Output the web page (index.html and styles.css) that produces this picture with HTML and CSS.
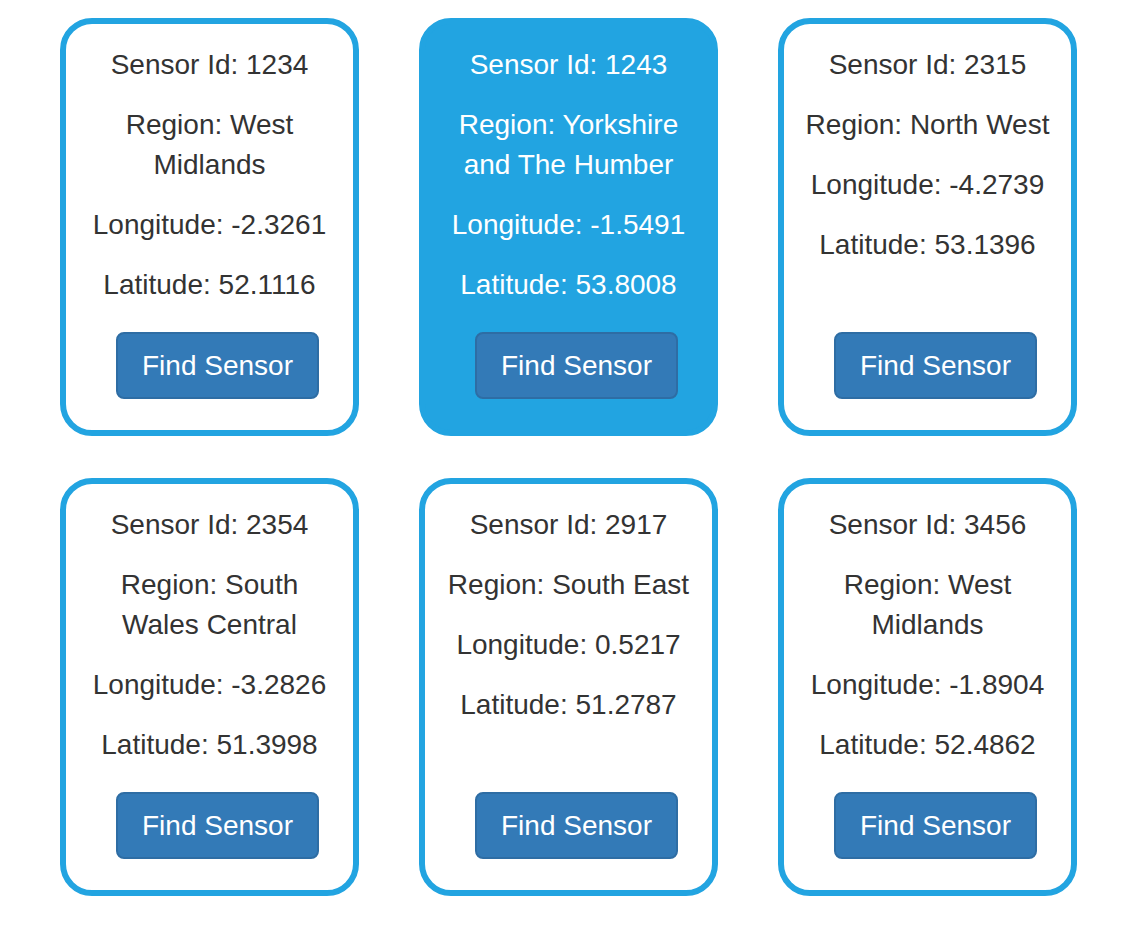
FILE: index.html
```html
<!DOCTYPE html>
<html>
<head>
<meta charset="utf-8">
<link rel="stylesheet" href="styles.css">
</head>
<body>
<div class="grid">
  <div class="card">
    <p>Sensor Id: 1234</p>
    <p>Region: West Midlands</p>
    <p>Longitude: -2.3261</p>
    <p>Latitude: 52.1116</p>
    <button class="btn">Find Sensor</button>
  </div>
  <div class="card selected">
    <p>Sensor Id: 1243</p>
    <p>Region: Yorkshire and The Humber</p>
    <p>Longitude: -1.5491</p>
    <p>Latitude: 53.8008</p>
    <button class="btn">Find Sensor</button>
  </div>
  <div class="card">
    <p>Sensor Id: 2315</p>
    <p>Region: North West</p>
    <p>Longitude: -4.2739</p>
    <p>Latitude: 53.1396</p>
    <button class="btn">Find Sensor</button>
  </div>
  <div class="card">
    <p>Sensor Id: 2354</p>
    <p>Region: South Wales Central</p>
    <p>Longitude: -3.2826</p>
    <p>Latitude: 51.3998</p>
    <button class="btn">Find Sensor</button>
  </div>
  <div class="card">
    <p>Sensor Id: 2917</p>
    <p>Region: South East</p>
    <p>Longitude: 0.5217</p>
    <p>Latitude: 51.2787</p>
    <button class="btn">Find Sensor</button>
  </div>
  <div class="card">
    <p>Sensor Id: 3456</p>
    <p>Region: West Midlands</p>
    <p>Longitude: -1.8904</p>
    <p>Latitude: 52.4862</p>
    <button class="btn">Find Sensor</button>
  </div>
</div>
</body>
</html>
```
FILE: styles.css
```css
html, body {
  margin: 0;
  padding: 0;
  background: #ffffff;
}
body {
  font-family: "Liberation Sans", Arial, Helvetica, sans-serif;
  font-size: 28px;
  line-height: 40px;
  color: #333333;
}
.grid {
  display: grid;
  grid-template-columns: repeat(3, 299px);
  column-gap: 60px;
  row-gap: 42px;
  padding: 18px 0 0 60px;
}
.card {
  box-sizing: border-box;
  height: 418px;
  border: 6px solid #22a4e1;
  border-radius: 32px;
  padding: 21px 10px 31px;
  display: flex;
  flex-direction: column;
  align-items: center;
  text-align: center;
  background: #ffffff;
}
.card p {
  margin: 0 0 20px;
  max-width: 250px;
}
.card.selected {
  background: #22a4e1;
  color: #ffffff;
}
.btn {
  margin-top: auto;
  margin-left: 16px;
  box-sizing: border-box;
  height: 67px;
  padding: 0 24px;
  font-family: inherit;
  font-size: 28px;
  line-height: 40px;
  color: #ffffff;
  background: #337ab7;
  border: 2px solid #2e6da4;
  border-radius: 8px;
  cursor: pointer;
}
```
